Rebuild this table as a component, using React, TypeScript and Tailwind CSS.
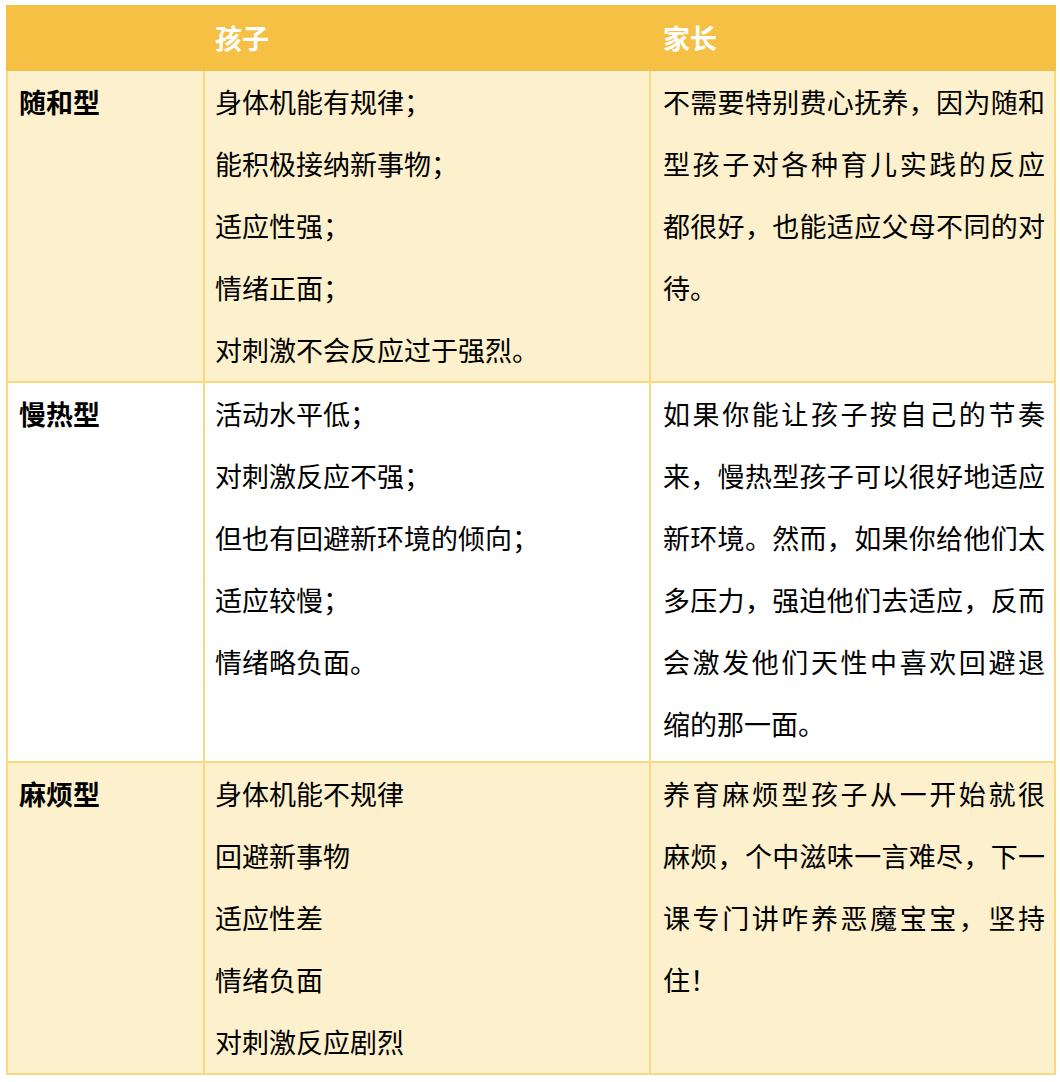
const FONT = "font-['Noto_Sans_CJK_SC','Noto_Sans',sans-serif]";

type Row = {
  name: string;
  kid: string[];
  parent: string[];
  bg: string;
  pad: string;
};

const ROWS: Row[] = [
  {
    name: "随和型",
    bg: "bg-[#fcf0cd]",
    pad: "",
    kid: ["身体机能有规律；", "能积极接纳新事物；", "适应性强；", "情绪正面；", "对刺激不会反应过于强烈。"],
    parent: ["不需要特别费心抚养，因为随和", "型孩子对各种育儿实践的反应", "都很好，也能适应父母不同的对", "待。"],
  },
  {
    name: "慢热型",
    bg: "bg-white",
    pad: "pb-[6px]",
    kid: ["活动水平低；", "对刺激反应不强；", "但也有回避新环境的倾向；", "适应较慢；", "情绪略负面。"],
    parent: [
      "如果你能让孩子按自己的节奏",
      "来，慢热型孩子可以很好地适应",
      "新环境。然而，如果你给他们太",
      "多压力，强迫他们去适应，反而",
      "会激发他们天性中喜欢回避退",
      "缩的那一面。",
    ],
  },
  {
    name: "麻烦型",
    bg: "bg-[#fcf0cd]",
    pad: "",
    kid: ["身体机能不规律", "回避新事物", "适应性差", "情绪负面", "对刺激反应剧烈"],
    parent: ["养育麻烦型孩子从一开始就很", "麻烦，个中滋味一言难尽，下一", "课专门讲咋养恶魔宝宝，坚持", "住！"],
  },
];

export default function App() {
  return (
    <div className={`min-h-[1082px] bg-white pt-[5px] pl-[6px] ${FONT} text-[27px] text-black`}>
      <table className="w-[1048px] table-fixed border-collapse">
        <colgroup>
          <col className="w-[197px]" />
          <col className="w-[446px]" />
          <col className="w-[405px]" />
        </colgroup>
        <thead>
          {/* header row, borders blend into the fill */}
          <tr className="bg-[#f5c043] h-[64px]">
            <th className="border-2 border-[#f5c043]" />
            <th className="border-2 border-[#f5c043] pl-[10px] text-left font-bold text-white">孩子</th>
            <th className="border-2 border-[#f5c043] pl-[12px] text-left font-bold text-white">家长</th>
          </tr>
        </thead>
        <tbody>
          {ROWS.map((row) => (
            <tr key={row.name} className={row.bg}>
              <td className={`border-2 border-[#fad87d] align-top pl-[11px] font-bold leading-[62px] ${row.pad}`}>
                {row.name}
              </td>
              <td className={`border-2 border-[#fad87d] align-top pl-[10px] leading-[62px] ${row.pad}`}>
                {row.kid.map((k) => (
                  <div key={k}>{k}</div>
                ))}
              </td>
              <td className={`border-2 border-[#fad87d] align-top pl-[12px] pr-[9px] leading-[62px] ${row.pad}`}>
                {row.parent.map((p, j) => (
                  <div
                    key={p}
                    className={`whitespace-nowrap ${j < row.parent.length - 1 ? "text-justify [text-align-last:justify]" : ""}`}
                  >
                    {p}
                  </div>
                ))}
              </td>
            </tr>
          ))}
        </tbody>
      </table>
    </div>
  );
}
